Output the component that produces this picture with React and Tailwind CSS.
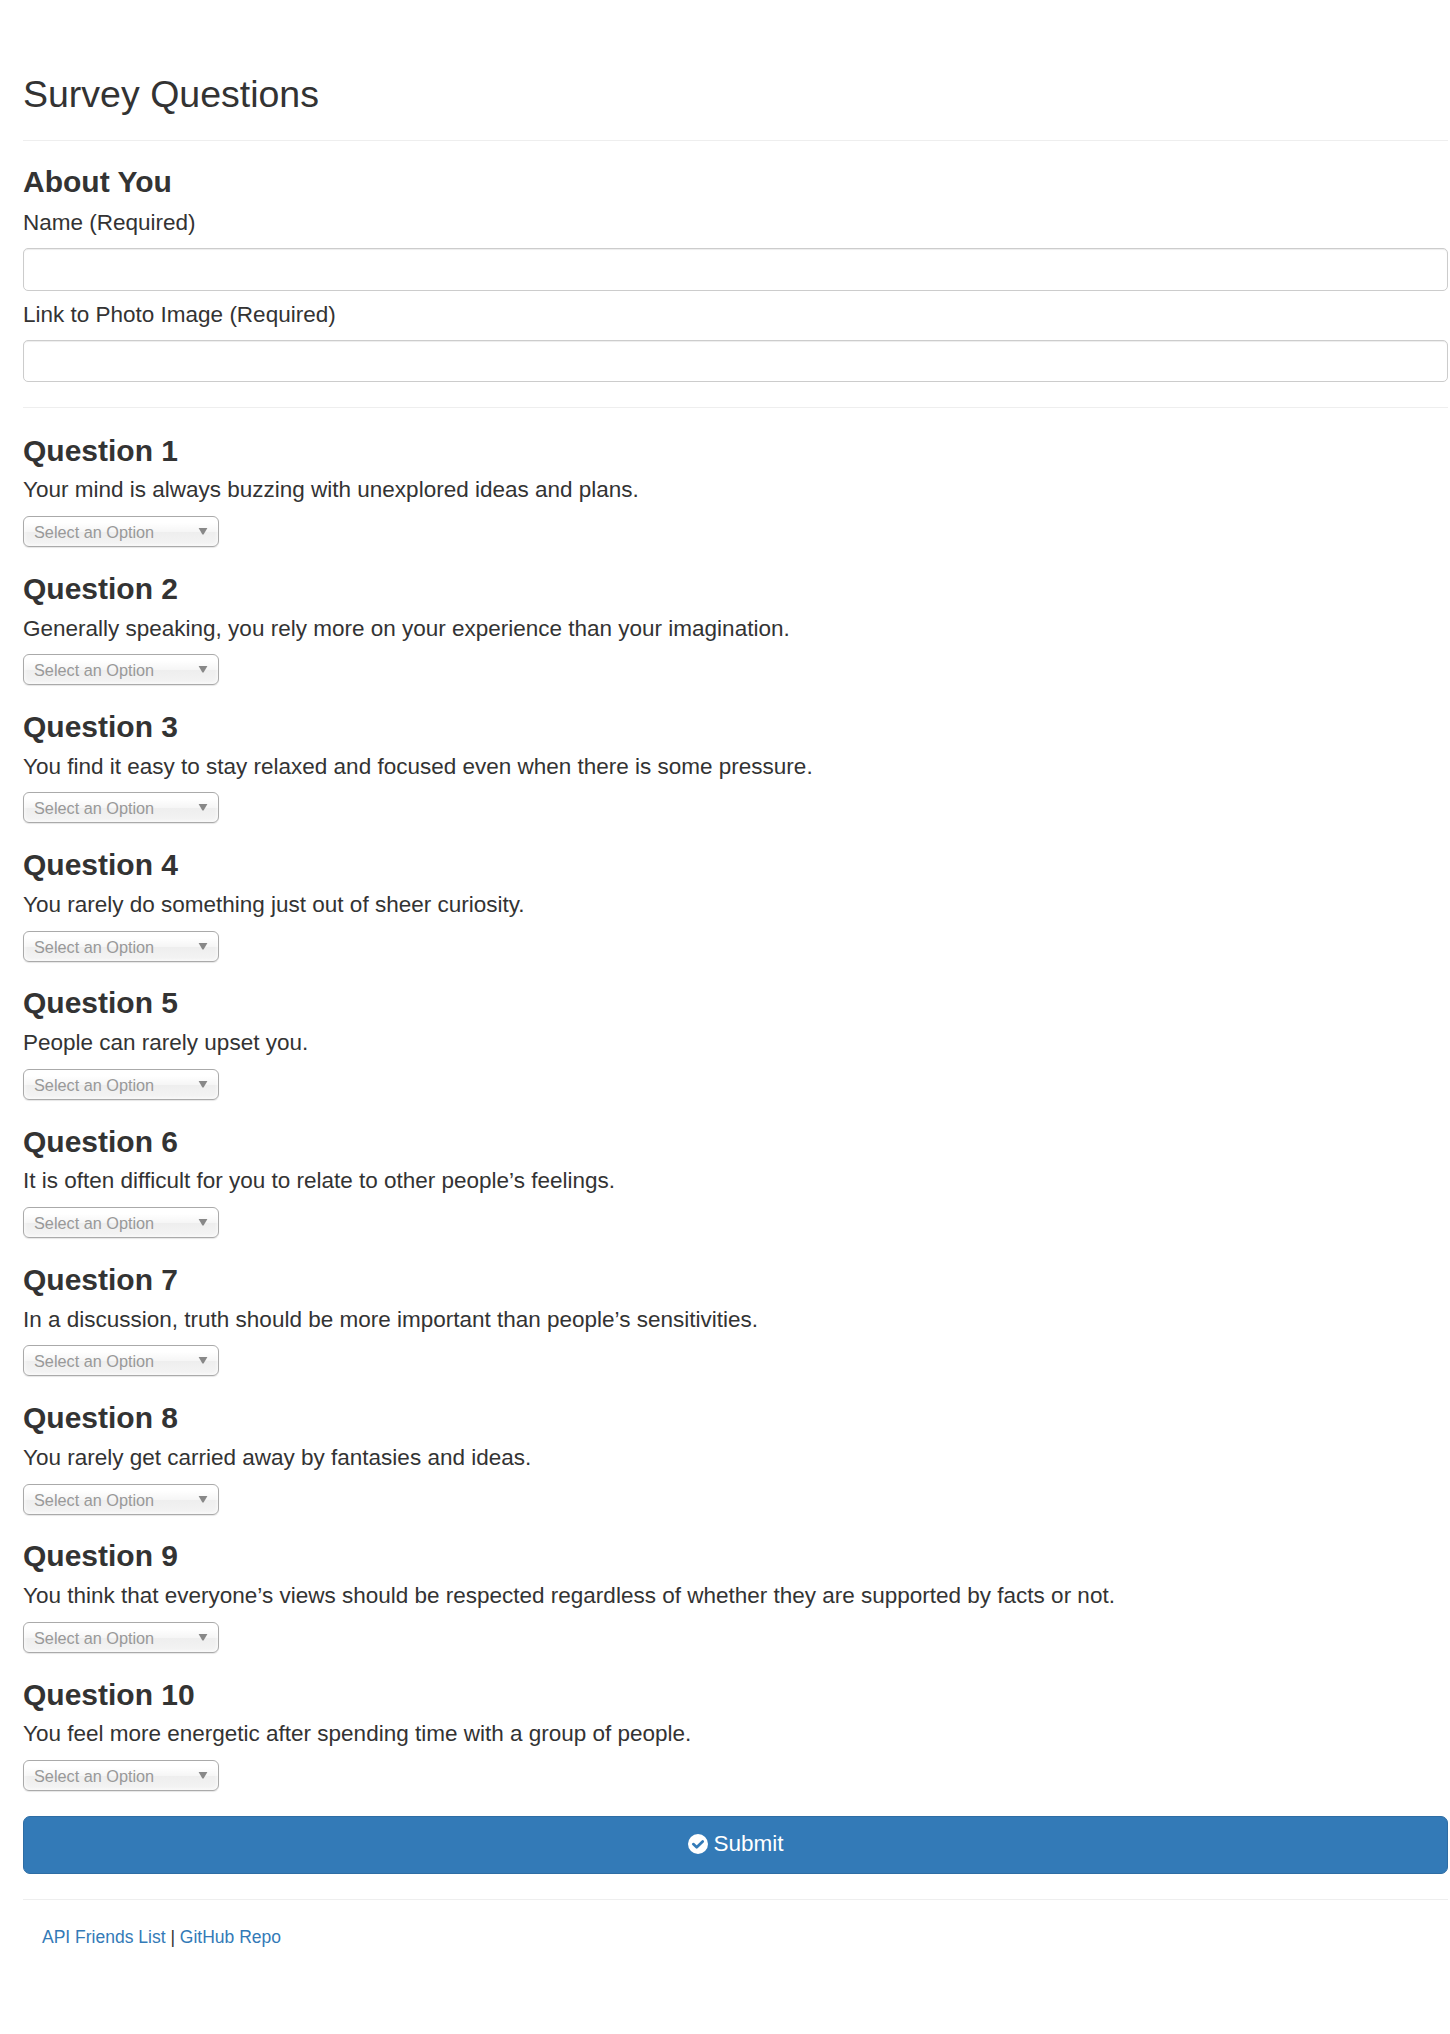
import React from "react";

const questions = [
  "Your mind is always buzzing with unexplored ideas and plans.",
  "Generally speaking, you rely more on your experience than your imagination.",
  "You find it easy to stay relaxed and focused even when there is some pressure.",
  "You rarely do something just out of sheer curiosity.",
  "People can rarely upset you.",
  "It is often difficult for you to relate to other people’s feelings.",
  "In a discussion, truth should be more important than people’s sensitivities.",
  "You rarely get carried away by fantasies and ideas.",
  "You think that everyone’s views should be respected regardless of whether they are supported by facts or not.",
  "You feel more energetic after spending time with a group of people.",
];

function Field({ id, label, inputClass }) {
  return (
    <div>
      <label htmlFor={id} className="block pt-px text-[22.5px] leading-8">
        {label}
      </label>
      <input
        id={id}
        type="text"
        className={`block w-full rounded-[5px] border border-[#ccc] bg-white px-4 text-[17.5px] shadow-[inset_0_1px_1px_rgba(0,0,0,0.075)] outline-none ${inputClass}`}
      />
    </div>
  );
}

function SelectBox() {
  return (
    <button
      type="button"
      className="mt-[9.6px] flex h-[31px] w-[196px] items-center justify-between rounded-[6px] border border-[#aaa] bg-[linear-gradient(#fff_20%,#f6f6f6_50%,#eee_52%,#f4f4f4_100%)] pr-[10px] pl-[10px] text-[16.25px] leading-[28px] text-[#999] shadow-[inset_0_0_4px_#fff,0_1px_1px_rgba(0,0,0,0.1)]"
    >
      <span className="pt-px">Select an Option</span>
      <svg width="10" height="7" viewBox="0 0 10 7" fill="#888">
        <path d="M.6 0h8.8L5.6 6.6H4.4z" />
      </svg>
    </button>
  );
}

function CheckIcon() {
  return (
    <svg width="20" height="20" viewBox="0 0 20 20" fill="none" className="mb-[2px]">
      <circle cx="10" cy="10" r="10" fill="#fff" />
      <path
        d="M5.3 10.1l3.4 3.2 6-5.8"
        stroke="#337ab7"
        strokeWidth="2.7"
        strokeLinecap="round"
        strokeLinejoin="round"
      />
    </svg>
  );
}

export default function App() {
  return (
    <div className="min-h-[2034px] bg-white pt-[74px] pr-[2px] pl-[23px] font-['Liberation_Sans',Arial,sans-serif] text-[#333]">
      <h2 className="text-[37.5px] leading-[41px]">Survey Questions</h2>
      <hr className="mt-[25px] mb-[24px] border-t border-[#eee]" />
      <h3 className="mb-2 text-[30px] leading-[33px] font-bold">About You</h3>
      <Field id="name" label="Name (Required)" inputClass="mt-[9px] mb-[7px] h-[43px]" />
      <Field id="photo" label="Link to Photo Image (Required)" inputClass="mt-[9px] h-[42px]" />
      <hr className="mt-[25px] mb-[25.6px] border-t border-[#eee]" />

      {questions.map((text, i) => (
        <section key={text} className="h-[138.22px]">
          <h3 className="mb-[7.8px] text-[30px] leading-[33px] font-bold">Question {i + 1}</h3>
          <p className="text-[22.5px] leading-8">{text}</p>
          <SelectBox />
        </section>
      ))}

      <button
        type="button"
        className="mt-[0.2px] flex h-[58px] w-full items-center justify-center gap-[5px] rounded-[7px] border border-[#2e6da4] bg-[#337ab7] pl-px text-[22.5px] leading-[30px] text-white"
      >
        <CheckIcon />
        <span className="pb-[2px]">Submit</span>
      </button>
      <hr className="mt-[25px] mb-[25px] border-t border-[#eee]" />
      <footer className="pl-[19px] text-[17.5px] leading-[25px]">
        <a href="#" className="text-[#337ab7]">API Friends List</a> |{" "}
        <a href="#" className="text-[#337ab7]">GitHub Repo</a>
      </footer>
    </div>
  );
}
